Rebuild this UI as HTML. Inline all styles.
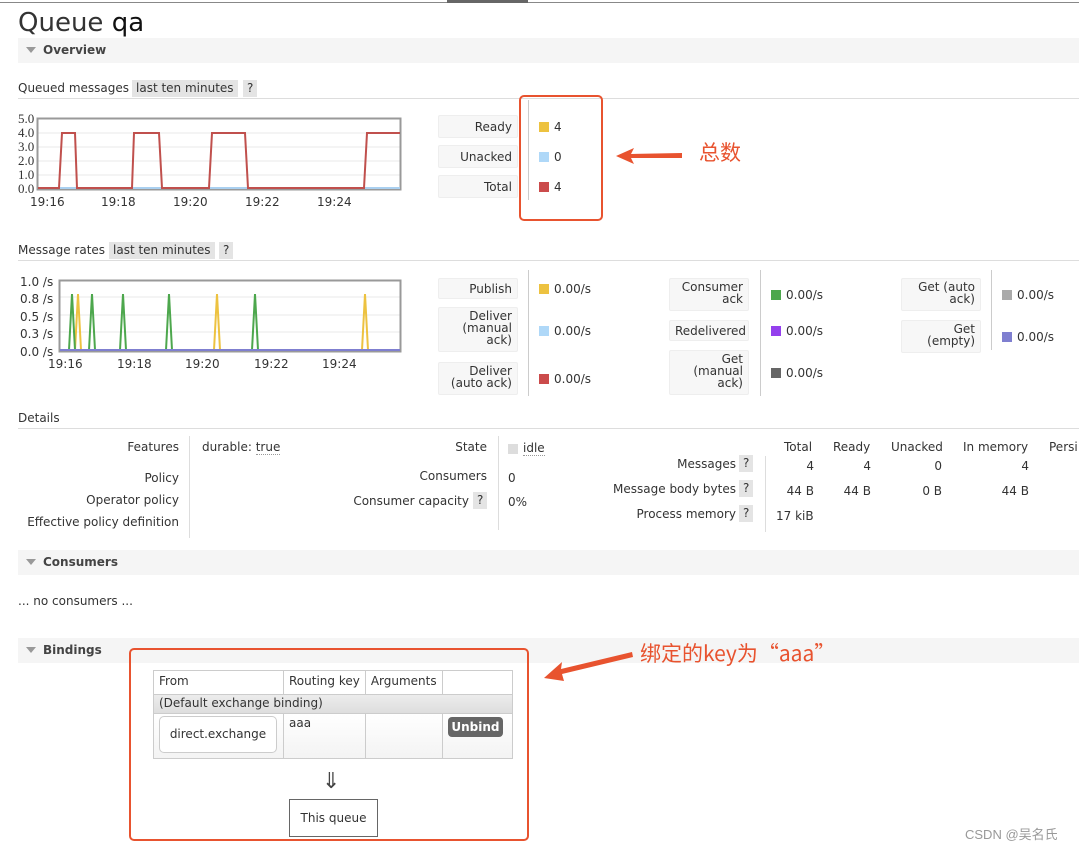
<!DOCTYPE html>
<html><head><meta charset="utf-8"><style>
*{margin:0;padding:0;box-sizing:border-box}
body{width:1079px;height:849px;position:relative;background:#fff;font-family:"DejaVu Sans","Liberation Sans","Noto Sans CJK SC",sans-serif;font-size:12px;color:#333;overflow:hidden}
.a{position:absolute;white-space:nowrap}
.bar{position:absolute;left:18px;right:0;height:25px;background:#f5f5f5}
.bar b{position:absolute;left:25px;top:5px;font-size:12px;color:#444}
.bar i{position:absolute;left:8px;top:9px;width:0;height:0;border-left:5px solid transparent;border-right:5px solid transparent;border-top:6px solid #999}
.tag{position:absolute;background:#e4e4e4;padding:0 4px;height:17px;line-height:17px}
.hl{position:absolute;left:18px;right:0;height:1px;background:#ddd}
.btn{position:absolute;background:#f7f7f7;border:1px solid #eee;border-radius:2px;text-align:right;padding:2px 5px;line-height:12px}
.vl{position:absolute;width:1px;background:#ccc}
.sw{position:absolute;width:10px;height:10px}
.r{text-align:right}
td{border:1px solid #ccc;padding:3px 5px;vertical-align:top}
</style></head><body>
<div class="a" style="left:0;top:2px;width:1079px;height:1px;background:#888"></div>
<div class="a" style="left:447px;top:0;width:81px;height:3px;background:#666"></div>
<div class="a" style="left:18px;top:8px;font-size:26px;color:#333">Queue <span style="color:#111">qa</span></div>
<div class="bar" style="top:38px"><i></i><b>Overview</b></div>

<div class="a" style="left:18px;top:81px">Queued messages</div>
<div class="tag" style="left:132px;top:80px">last ten minutes</div>
<div class="tag" style="left:243px;top:80px">?</div>
<div class="hl" style="top:98px"></div>

<svg class="a" style="left:0;top:110px" width="410" height="100">
<g font-size="13" fill="#333" font-family="Liberation Serif,serif">
<text x="18" y="13">5.0</text><text x="18" y="27">4.0</text><text x="18" y="41">3.0</text><text x="18" y="55">2.0</text><text x="18" y="69">1.0</text><text x="18" y="83">0.0</text>
</g>
<g font-size="12" fill="#333" font-family="DejaVu Sans">
<text x="30" y="96">19:16</text><text x="101" y="96">19:18</text><text x="173" y="96">19:20</text><text x="245" y="96">19:22</text><text x="317" y="96">19:24</text>
</g>
<g stroke="#e8e8e8"><line x1="38" y1="23" x2="401" y2="23"/><line x1="38" y1="37" x2="401" y2="37"/><line x1="38" y1="51" x2="401" y2="51"/><line x1="38" y1="65" x2="401" y2="65"/></g>
<rect x="37.5" y="8.5" width="363" height="71" fill="none" stroke="#999" stroke-width="2"/>
<line x1="38" y1="78" x2="400" y2="78" stroke="#aad0f0" stroke-width="2"/>
<polyline fill="none" stroke="#c0504d" stroke-width="2" points="38,78 59,78 62,23 75,23 77,78 132,78 134,23 159,23 162,78 209,78 212,23 245,23 248,78 364,78 367,23 400,23"/>
</svg>

<div class="btn" style="left:438px;top:115px;width:80px;height:23px;padding-top:5px">Ready</div>
<div class="btn" style="left:438px;top:145px;width:80px;height:23px;padding-top:5px">Unacked</div>
<div class="btn" style="left:438px;top:175px;width:80px;height:23px;padding-top:5px">Total</div>
<div class="vl" style="left:528px;top:100px;height:100px"></div>
<div class="sw" style="left:539px;top:122px;background:#edc240"></div><div class="a" style="left:554px;top:120px">4</div>
<div class="sw" style="left:539px;top:152px;background:#afd8f8"></div><div class="a" style="left:554px;top:150px">0</div>
<div class="sw" style="left:539px;top:182px;background:#cb4b4b"></div><div class="a" style="left:554px;top:180px">4</div>
<div class="a" style="left:519px;top:95px;width:84px;height:126px;border:2px solid #e8532f;border-radius:5px"></div>
<svg class="a" style="left:612px;top:144px" width="75" height="24"><polygon points="4,12 22,4 19,10 70,9 70,14 19,14 22,20" fill="#e8532f"/></svg>
<div class="a" style="left:699px;top:137px;font-size:21px;color:#e8532f;font-family:'Noto Sans CJK SC',sans-serif">总数</div>

<div class="a" style="left:18px;top:243px">Message rates</div>
<div class="tag" style="left:109px;top:242px">last ten minutes</div>
<div class="tag" style="left:219px;top:242px">?</div>
<div class="hl" style="top:260px"></div>

<svg class="a" style="left:0;top:270px" width="410" height="105">
<g font-size="12" fill="#333" font-family="DejaVu Sans">
<text x="20" y="16">1.0 /s</text><text x="20" y="33">0.8 /s</text><text x="20" y="51">0.5 /s</text><text x="20" y="68">0.3 /s</text><text x="20" y="86">0.0 /s</text>
<text x="48" y="98">19:16</text><text x="117" y="98">19:18</text><text x="185" y="98">19:20</text><text x="254" y="98">19:22</text><text x="322" y="98">19:24</text>
</g>
<g stroke="#e8e8e8"><line x1="60" y1="27" x2="401" y2="27"/><line x1="60" y1="45" x2="401" y2="45"/><line x1="60" y1="62" x2="401" y2="62"/></g>
<rect x="59.5" y="10.5" width="341" height="71" fill="none" stroke="#999" stroke-width="2"/>
<g fill="none" stroke-width="2">
<polyline stroke="#edc240" points="75,80 78,24 81,80"/><polyline stroke="#edc240" points="214,80 217,24 220,80"/><polyline stroke="#edc240" points="362,80 365,24 368,80"/>
<polyline stroke="#4da74d" points="69,80 72,24 75,80"/><polyline stroke="#4da74d" points="89,80 92,24 95,80"/><polyline stroke="#4da74d" points="120,80 123,24 126,80"/><polyline stroke="#4da74d" points="166,80 169,24 172,80"/><polyline stroke="#4da74d" points="252,80 255,24 258,80"/>
</g>
<line x1="60" y1="80" x2="400" y2="80" stroke="#7f7fd0" stroke-width="2"/>
</svg>

<div class="btn" style="left:438px;top:278px;width:80px;height:21px;padding-top:4px">Publish</div>
<div class="btn" style="left:438px;top:307px;width:80px;height:45px">Deliver<br>(manual<br>ack)</div>
<div class="btn" style="left:438px;top:362px;width:80px;height:33px">Deliver<br>(auto ack)</div>
<div class="vl" style="left:528px;top:270px;height:126px"></div>
<div class="sw" style="left:539px;top:284px;background:#edc240"></div><div class="a" style="left:554px;top:282px">0.00/s</div>
<div class="sw" style="left:539px;top:326px;background:#afd8f8"></div><div class="a" style="left:554px;top:324px">0.00/s</div>
<div class="sw" style="left:539px;top:374px;background:#cb4b4b"></div><div class="a" style="left:554px;top:372px">0.00/s</div>

<div class="btn" style="left:669px;top:278px;width:80px;height:33px">Consumer<br>ack</div>
<div class="btn" style="left:669px;top:320px;width:80px;height:21px;padding-top:4px">Redelivered</div>
<div class="btn" style="left:669px;top:350px;width:80px;height:45px">Get<br>(manual<br>ack)</div>
<div class="vl" style="left:760px;top:270px;height:126px"></div>
<div class="sw" style="left:771px;top:290px;background:#4da74d"></div><div class="a" style="left:786px;top:288px">0.00/s</div>
<div class="sw" style="left:771px;top:326px;background:#9440ed"></div><div class="a" style="left:786px;top:324px">0.00/s</div>
<div class="sw" style="left:771px;top:368px;background:#666"></div><div class="a" style="left:786px;top:366px">0.00/s</div>

<div class="btn" style="left:901px;top:278px;width:80px;height:33px">Get (auto<br>ack)</div>
<div class="btn" style="left:901px;top:320px;width:80px;height:33px">Get<br>(empty)</div>
<div class="vl" style="left:991px;top:270px;height:80px"></div>
<div class="sw" style="left:1002px;top:290px;background:#aaa"></div><div class="a" style="left:1017px;top:288px">0.00/s</div>
<div class="sw" style="left:1002px;top:332px;background:#7f7fd0"></div><div class="a" style="left:1017px;top:330px">0.00/s</div>

<div class="a" style="left:18px;top:411px">Details</div>
<div class="hl" style="top:428px"></div>
<div class="a r" style="right:900px;top:440px">Features</div>
<div class="a r" style="right:900px;top:471px">Policy</div>
<div class="a r" style="right:900px;top:493px">Operator policy</div>
<div class="a r" style="right:900px;top:515px">Effective policy definition</div>
<div class="vl" style="left:189px;top:436px;height:102px;background:#ddd"></div>
<div class="a" style="left:202px;top:440px">durable: <span style="border-bottom:1px dotted #999">true</span></div>
<div class="a r" style="right:592px;top:440px">State</div>
<div class="a r" style="right:592px;top:469px">Consumers</div>
<div class="a r" style="right:610px;top:494px">Consumer capacity</div>
<div class="tag" style="left:473px;top:492px">?</div>
<div class="vl" style="left:498px;top:436px;height:94px;background:#ddd"></div>
<div class="sw" style="left:508px;top:444px;background:#ddd"></div>
<div class="a" style="left:523px;top:441px;border-bottom:1px dotted #999">idle</div>
<div class="a" style="left:508px;top:471px">0</div>
<div class="a" style="left:508px;top:495px">0%</div>
<div class="a r" style="right:343px;top:457px">Messages</div><div class="tag" style="left:739px;top:455px">?</div>
<div class="a r" style="right:343px;top:482px">Message body bytes</div><div class="tag" style="left:739px;top:480px">?</div>
<div class="a r" style="right:343px;top:507px">Process memory</div><div class="tag" style="left:739px;top:505px">?</div>
<div class="vl" style="left:765px;top:456px;height:76px;background:#ddd"></div>
<div class="a" style="left:784px;top:440px">Total</div><div class="a" style="left:833px;top:440px">Ready</div><div class="a" style="left:891px;top:440px">Unacked</div><div class="a" style="left:963px;top:440px">In memory</div><div class="a" style="left:1049px;top:440px">Persi</div>
<div class="a r" style="right:265px;top:459px">4</div><div class="a r" style="right:208px;top:459px">4</div><div class="a r" style="right:137px;top:459px">0</div><div class="a r" style="right:50px;top:459px">4</div>
<div class="a r" style="right:265px;top:484px">44 B</div><div class="a r" style="right:208px;top:484px">44 B</div><div class="a r" style="right:137px;top:484px">0 B</div><div class="a r" style="right:50px;top:484px">44 B</div>
<div class="a" style="left:776px;top:509px">17 kiB</div>

<div class="bar" style="top:550px"><i></i><b>Consumers</b></div>
<div class="a" style="left:18px;top:594px">... no consumers ...</div>

<div class="bar" style="top:638px"><i></i><b>Bindings</b></div>
<table class="a" style="left:153px;top:670px;width:360px;border-collapse:collapse;background:#fff">
<tr style="height:24px"><td style="width:130px">From</td><td style="width:81px">Routing key</td><td style="width:77px">Arguments</td><td></td></tr>
<tr style="height:19px;background:linear-gradient(#ececec,#ddd)"><td colspan="4" style="padding:1px 5px">(Default exchange binding)</td></tr>
<tr style="height:45px;background:linear-gradient(#fff,#f3f3f3)"><td style="padding:2px 5px"><div style="border:1px solid #ccc;border-radius:5px;background:#fff;height:37px;line-height:35px;text-align:center;width:118px">direct.exchange</div></td><td style="padding-top:2px">aaa</td><td></td><td style="padding:3px 9px 0 5px"><div style="background:#666;color:#fff;font-weight:bold;border-radius:4px;text-align:center;height:20px;line-height:20px">Unbind</div></td></tr>
</table>
<div class="a" style="left:322px;top:770px;font-size:22px;color:#444;line-height:24px">⇓</div>
<div class="a" style="left:289px;top:799px;width:89px;height:38px;border:1px solid #666;text-align:center;line-height:36px">This queue</div>
<div class="a" style="left:129px;top:648px;width:400px;height:193px;border:2px solid #e8532f;border-radius:5px"></div>
<svg class="a" style="left:540px;top:640px" width="100" height="45"><polygon points="4,38 22,22 21,29 92,12 93,17 22,34 24,41" fill="#e8532f"/></svg>
<div class="a" style="left:640px;top:638px;font-size:21px;color:#e8532f;font-family:'Noto Sans CJK SC',sans-serif">绑定的key为“aaa”</div>
<div class="a" style="left:965px;top:824px;font-size:13px;color:#999;font-family:'Liberation Sans','Noto Sans CJK SC',sans-serif">CSDN @吴名氏</div>
</body></html>
